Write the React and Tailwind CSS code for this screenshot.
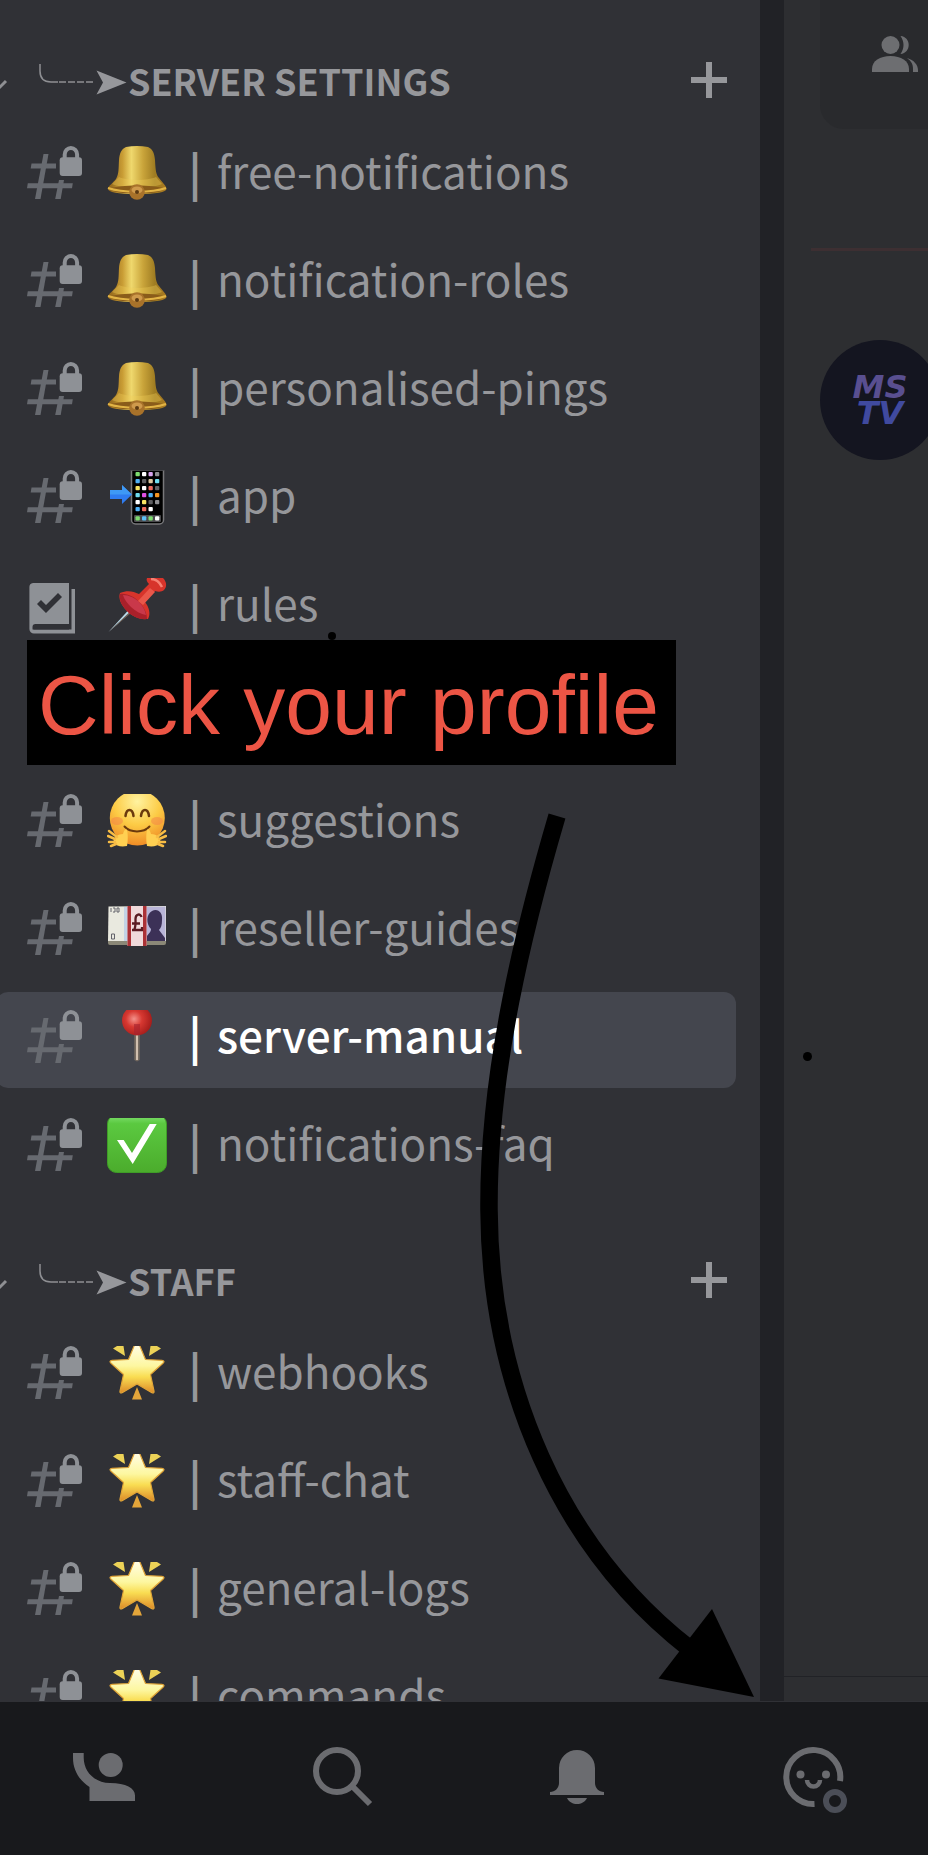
const serverChannels = [
  { name: 'free-notifications', emoji: 'bell' },
  { name: 'notification-roles', emoji: 'bell' },
  { name: 'personalised-pings', emoji: 'bell' },
  { name: 'app', emoji: 'phone' },
  { name: 'rules', emoji: 'pushpin', rules: true },
  { banner: 'Click your profile' },
  { name: 'suggestions', emoji: 'hug' },
  { name: 'reseller-guides', emoji: 'pounds' },
  { name: 'server-manual', emoji: 'roundPin', active: true },
  { name: 'notifications-faq', emoji: 'check' },
]

const staffChannels = [
  { name: 'webhooks', emoji: 'star' },
  { name: 'staff-chat', emoji: 'star' },
  { name: 'general-logs', emoji: 'star' },
  { name: 'commands', emoji: 'star' },
]

function LockedHash() {
  return (
    <svg viewBox="0 0 56 60" className="h-[60px] w-14 shrink-0" aria-hidden="true">
      <g fill="#676a70">
        <path d="M16.5 8h5l-8 45h-5.500z" />
        <path d="M32 34h5l-3.300 19h-5.500z" />
        <path d="M4.500 17.500H29v5H3.700z" />
        <path d="M.8 37.300h45l-.8 5H0z" />
      </g>
      <rect x="32.700" y="11.300" width="22.300" height="18.700" rx="3" fill="#8e9196" />
      <path d="M37.700 13V8.500a6.200 6.500 0 0 1 12.400 0V13" fill="none" stroke="#8e9196" strokeWidth="4" />
    </svg>
  )
}

function RulesBook() {
  return (
    <svg viewBox="0 0 56 60" className="h-[60px] w-14 shrink-0" aria-hidden="true">
      <path
        fill="#8e9196"
        fillRule="evenodd"
        d="M6 5h36v41H8.500a3 3 0 0 0-3 3v2.500H44.500V11H48v44.500H7a4.500 4.500 0 0 1-4.600-4.500V9A4 4 0 0 1 6 5zM10 26l9 9 16-16-4-4-12 12-5-5z"
      />
      <path d="M6.500 47H42v4.500H6.500z" fill="#303136" />
    </svg>
  )
}

const screenDots = [
  ['#7ddb6f', '#ffffff', '#d9a5ee', '#8d8d90'],
  ['#4fb0f5', '#5f5f62', '#dcc7a0', '#6fdcee'],
  ['#f7e463', '#ffffff', '#ea6a5c', '#626265'],
  ['#6fdcee', '#e04fe2', '#4fb0f5', '#f59420'],
  ['#ffffff', '#f7e463', '#5c5c5f', '#8d8d90'],
  ['#4fb0f5', '#ea6a5c', '#ffffff'],
]

const emojiArt = {
  bell: (
    <>
      <defs>
        <linearGradient id="bellBody" x1="0" x2="1">
          <stop offset="0" stopColor="#8c6018" />
          <stop offset=".25" stopColor="#c99d35" />
          <stop offset=".4" stopColor="#efd86d" />
          <stop offset=".6" stopColor="#c9a43a" />
          <stop offset=".8" stopColor="#9f7c22" />
          <stop offset="1" stopColor="#a97820" />
        </linearGradient>
      </defs>
      <path
        d="M19 1Q30-1 41 1c5 2 6.500 7 7 13 .5 10 1 15 4 18 3 4 7.500 8 7.500 11 0 3-10 5-29.500 5S1 46 1 43c0-3 5-6 8-10 3-5 2.500-11 3-19 .5-6 2-11 7-13z"
        fill="url(#bellBody)"
      />
      <path d="M12 31c8 4 28 4 37 0l6 7c-12 5-38 5-50 0z" fill="#f0cf5a" opacity=".35" />
      <path d="M2 42.500c12-4 44-4 56 0-4 4-14 5-28 5s-24-1-28-5z" fill="#8a5c1a" />
      <path d="M1 42c14 5 44 5 58 0" fill="none" stroke="#e2b445" strokeWidth="2" />
      <circle cx="30" cy="46" r="7.800" fill="#a8722a" />
      <ellipse cx="30" cy="44" rx="5.500" ry="3.500" fill="#cf9a4c" />
      <circle cx="30" cy="46" r="2" fill="#5e3a12" />
    </>
  ),
  phone: (
    <>
      <path d="M24.500 0h32v50a4 4 0 0 1-4 4h-24a4 4 0 0 1-4-4z" fill="#000" stroke="#77777a" strokeWidth="1.500" />
      <path d="M24 0h33" stroke="#303136" />
      {screenDots.map((row, y) =>
        row.map((fill, x) => (
          <rect key={`${x}-${y}`} x={28.5 + x * 6.500} y={2 + y * 7} width="4.300" height="4.300" rx="1" fill={fill} />
        )),
      )}
      <rect x="27" y="45" width="27" height="7" rx="1" fill="#4a4a4d" />
      {['#7ddb6f', '#5cc0f5', '#7ddb6f', '#ffffff'].map((fill, x) => (
        <rect key={x} x={28.5 + x * 6.500} y="46.300" width="4.300" height="4.300" rx="1" fill={fill} />
      ))}
      <path d="M3 20h12v-5l10 9.500-10 9.500v-5H3z" fill="#2f7cf0" />
      <path d="M3 20h12v-5l10 9.500H3z" fill="#45a5f7" opacity=".7" />
    </>
  ),
  pushpin: (
    <>
      <path d="M27 26l3 3L1.500 54z" fill="#b9dcec" />
      <path d="M29 28l1.500 1.500L1.500 54z" fill="#6b5a50" />
      <path d="M40 0h16c4 4 4 9 1 12-2 2-6 2-9 1L38 24c4 5 6 12 3 17-9 1-16-3-21-8-6-6-9-13-7-18 7-3 13-2 19 1l10-10c-2-2-3-4-2-6z" fill="#d7342b" />
      <path d="M13 16c7-1 15 3 19 8 5 5 8 11 8 17-8 1-15-3-20-8-5-5-8-11-7-17z" fill="#a9202a" />
      <path d="M16 17c6 0 12 3 16 7s6 8 7 13c-5-1-11-4-15-8s-7-8-8-12z" fill="#c9384a" />
      <path d="M43 10l5 4-12 13-5-4z" fill="#e9574a" />
      <path d="M44 1c5 0 9 4 11 8" fill="none" stroke="#f58073" strokeWidth="2.500" />
    </>
  ),
  hug: (
    <>
      <defs>
        <radialGradient id="hugFace" cx=".5" cy=".2" r=".85">
          <stop offset="0" stopColor="#fff3a0" />
          <stop offset=".5" stopColor="#fccb45" />
          <stop offset="1" stopColor="#ee8422" />
        </radialGradient>
      </defs>
      <circle cx="30.300" cy="24" r="27.500" fill="url(#hugFace)" />
      <ellipse cx="10" cy="27" rx="6" ry="4" fill="#f4824a" opacity=".5" />
      <ellipse cx="50" cy="27" rx="6" ry="4" fill="#f4824a" opacity=".5" />
      <g fill="none" stroke="#6b3a0d" strokeLinecap="round">
        <path d="M18.500 22c1-8 7-8 8 0M34 22c1-8 7-8 8 0" strokeWidth="2.500" />
        <path d="M17.500 32.500c6 6.500 19 6.500 25 0" strokeWidth="2" />
      </g>
      <path d="M20 52c-6 1-11 0-13-3-2-4 3-9 9-9 1-4 3-6 4-4 1 4 1 11 0 16z" fill="#ffd052" />
      <path d="M40 52c6 1 11 0 13-3 2-4-3-9-9-9-1-4-3-6-4-4-1 4-1 11 0 16z" fill="#ffd052" />
      <g stroke="#f8bd45" strokeWidth="2.500" strokeLinecap="round">
        <path d="M10 43l-8-6M8 45l-7-3M8 48l-6 0M9 50l-5 2" />
        <path d="M50 43l8-6M52 45l7-3M52 48l6 0M51 50l5 2" />
      </g>
    </>
  ),
  pounds: (
    <>
      <path d="M1 38h58v3a2 2 0 0 1-2 2H3a2 2 0 0 1-2-2z" fill="#8b8877" />
      <path d="M1.500 4.500L59 4v35H1z" fill="#e9e9df" />
      <path d="M17 5h4v34h-4z" fill="#c3d3e6" />
      <path d="M39 5l19.500-.5V39H39z" fill="#b9b5d8" />
      <path d="M40 34c2-3 4-4 4-7-5-5-5-15 1-18 6-3 11 2 10 9 0 5-1 8-3 10l6 8v3H40z" fill="#3c3157" />
      <path d="M4 6v4M6 6h2v4H6M10 6v4h2V6zM4.500 32h3v5h-3z" fill="none" stroke="#63636b" />
      <path d="M20.500 4h19v40h-19z" fill="#f0dadb" />
      <path d="M20.500 4H24v40h-3.500zM36 4h3.500v40H36z" fill="#ac3236" />
      <path d="M25 28h10v-3M27 28c2-3 1.500-6 1.500-11 0-5 5-6 6-2M25 21.500h8" fill="none" stroke="#5a1b22" strokeWidth="2.300" />
    </>
  ),
  roundPin: (
    <>
      <defs>
        <radialGradient id="pinHead" cx=".4" cy=".45" r=".6">
          <stop offset="0" stopColor="#f3918a" />
          <stop offset=".45" stopColor="#d73831" />
          <stop offset="1" stopColor="#a61d1b" />
        </radialGradient>
      </defs>
      <path d="M27.300 24h5.400v26l-2.700 1.500-2.700-1.500z" fill="#756a60" />
      <path d="M29 24h2v26h-2z" fill="#d0bfae" />
      <circle cx="30" cy="10.500" r="15" fill="url(#pinHead)" />
      <path d="M27 14h6v11h-6z" fill="#a32330" opacity=".6" />
    </>
  ),
  check: (
    <>
      <defs>
        <linearGradient id="checkBox" x1="0" y1="0" x2="0" y2="1">
          <stop offset="0" stopColor="#7fe070" />
          <stop offset=".15" stopColor="#5bc940" />
          <stop offset="1" stopColor="#4bac2c" />
        </linearGradient>
      </defs>
      <rect x=".5" y="-3" width="59" height="57.500" rx="9" fill="url(#checkBox)" stroke="#3f9d27" />
      <path d="M10 22h6.700L25 35 42.700 6h7l-24 40z" fill="#fff" />
    </>
  ),
  star: (
    <>
      <defs>
        <linearGradient id="starFill" x1="0" y1="0" x2="0" y2="1">
          <stop offset=".1" stopColor="#fffde8" />
          <stop offset=".5" stopColor="#fdf7a0" />
          <stop offset=".7" stopColor="#f9dd52" />
          <stop offset="1" stopColor="#dd8a28" />
        </linearGradient>
      </defs>
      <path
        d="M30-7l8.500 20.500L55 14.300c2 .2 2.500 1.700 1.200 2.700L43.500 28.500 47 45c.3 2-.8 2.500-2.500 1.500L30 38l-14.500 8.500c-1.700 1-2.800.5-2.500-1.500l3.500-16.500L3.800 17c-1.300-1-.8-2.500 1.200-2.700l16.500-.8z"
        fill="url(#starFill)"
        stroke="#e0a437"
        strokeWidth="1.200"
        strokeLinejoin="round"
      />
      <path d="M6 2.500L10 0h6.500L18 10zM54 2.500L50 0h-6.500L42 10z" fill="#ecd257" />
      <path d="M30 41l5 12.500H25z" fill="#e3a53a" />
    </>
  ),
}

function Emoji({ name }) {
  return (
    <svg viewBox="0 0 60 60" className="ml-6 size-[60px] shrink-0" aria-hidden="true">
      {emojiArt[name]}
    </svg>
  )
}

function Channel({ channel }) {
  return (
    <a
      href={`#${channel.name}`}
      className={
        channel.active
          ? 'flex h-24 items-center rounded-xl bg-[#44464e] pl-[31px] font-medium text-white'
          : 'flex h-24 items-center rounded-xl pl-[31px] text-[#96979b]'
      }
    >
      {channel.rules ? <RulesBook /> : <LockedHash />}
      <Emoji name={channel.emoji} />
      <span className="ml-5 flex w-4 justify-center pb-3 text-[44px] font-bold leading-[56px]">|</span>
      <span className="ml-3.5 whitespace-nowrap pb-3 text-[44px] leading-[56px]">{channel.name}</span>
    </a>
  )
}

function Category({ title, channels }) {
  return (
    <section>
      <div className="flex h-24 items-center justify-between pr-[33px]">
        <h2 className="flex items-center text-[36px] font-bold leading-[48px] text-[#96979b]">
          <svg viewBox="0 0 128 48" className="h-12 w-32 shrink-0" fill="none" stroke="#8e8f93" aria-hidden="true">
            <path d="M-4 27L0 31l6-6" strokeWidth="3" />
            <path d="M40 8v7q0 11 11 11h7" strokeWidth="1.500" />
            <path d="M59 26h35" strokeWidth="1.500" strokeDasharray="7 2" />
            <path d="M96.500 14.500l30 12-30 12 6.500-12z" fill="#96979b" stroke="none" />
          </svg>
          {title}
        </h2>
        <button aria-label={`Add channel to ${title}`}>
          <svg viewBox="0 0 36 36" className="size-9" stroke="#96979b" strokeWidth="6">
            <path d="M18 0v36M0 18h36" />
          </svg>
        </button>
      </div>
      <ul className="-ml-1 flex flex-col gap-3 pr-6">
        {channels.map((channel) =>
          channel.banner ? (
            <li key={channel.banner} className="relative h-24">
              <p className="absolute -top-7 left-[31px] h-[125px] w-[649px] whitespace-nowrap bg-black pl-[11px] font-['Liberation_Sans',sans-serif] text-[84px] leading-[130px] text-[#ec5545]">
                {channel.banner}
              </p>
            </li>
          ) : (
            <li key={channel.name}>
              <Channel channel={channel} />
            </li>
          ),
        )}
      </ul>
    </section>
  )
}

function ChatPeek() {
  return (
    <aside className="flex w-36 shrink-0 flex-col overflow-hidden bg-[#2d2e31]">
      <div className="ml-9 h-[129px] rounded-bl-3xl bg-[#292a2d] pl-[52px] pt-9">
        <svg viewBox="0 0 46 36" className="h-9 w-[46px]" fill="#6d6e71" aria-hidden="true">
          <circle cx="18.500" cy="9" r="9" />
          <path d="M0 36v-3C0 25 8 20 18.500 20S37 25 37 33v3z" />
          <path d="M28.500 0c11 1 11 17 0 18 4-6 4-12 0-18zM35 22c7 2 11 7 11 12v2h-5v-3c0-5-2-8-6-11z" />
        </svg>
      </div>
      <div className="ml-[27px] mt-[119px] h-[3px] shrink-0 bg-[#3d2f32]" />
      <div className="ml-9 mt-[89px] flex size-[120px] shrink-0 flex-col items-center justify-center rounded-full bg-[#141520] font-['DejaVu_Sans',sans-serif] text-[32px] font-bold italic leading-[26px]">
        <span className="text-[#594f90]">MS</span>
        <span className="text-[#404a9f]">TV</span>
      </div>
      <div className="mt-auto h-[25px] shrink-0 border-t border-[#212226]" />
    </aside>
  )
}

function Annotations() {
  return (
    <svg className="pointer-events-none absolute inset-0 size-full" aria-hidden="true">
      <path d="M557 816C525 925 488 1070 489 1210C490 1385 560 1548 690 1649" fill="none" stroke="#000" strokeWidth="17.500" />
      <path d="M712 1609l42 88-95.500-18.500z" />
      <circle cx="332" cy="636" r="4" />
      <circle cx="807.500" cy="1056.500" r="4.500" />
    </svg>
  )
}

function TabBar() {
  return (
    <nav className="flex h-[154px] shrink-0 justify-between border-t border-[#303136] bg-[#18191c] pl-[68px] pr-[79px] pt-[39px] text-[#6b6c70]">
      <button aria-label="Friends" className="size-[72px]">
        <svg viewBox="0 0 72 72" fill="currentColor">
          <path d="M5 12h10.700v4.500C15.700 31 27 42 42 42c16 0 25 5 25 12.500V60H21.500V46C11 39 5 29 5 17z" />
          <circle cx="42.700" cy="24" r="12" />
        </svg>
      </button>
      <button aria-label="Search" className="size-[72px]">
        <svg viewBox="0 0 72 72" fill="none" stroke="currentColor" strokeWidth="6">
          <circle cx="33" cy="30" r="21" />
          <path d="M48 45l18 18" />
        </svg>
      </button>
      <button aria-label="Notifications" className="size-[72px]">
        <svg viewBox="0 0 72 72" fill="currentColor">
          <path d="M9 54v-3c5 0 9-4 9-9V27a18 18 0 0 1 36 0v15c0 5 4 9 9 9v3zM26 57h20c-4 8-16 8-20 0z" />
        </svg>
      </button>
      <button aria-label="Profile" className="size-[72px]">
        <svg viewBox="0 0 72 72" className="overflow-visible" fill="none" stroke="currentColor" strokeWidth="6">
          <path d="M37.500 63A27 27 0 1 1 63 40" />
          <path d="M30 39a6.500 6.500 0 0 0 13 0" strokeWidth="4.500" />
          <g fill="currentColor" stroke="none">
            <circle cx="23.500" cy="33.500" r="4" />
            <circle cx="49" cy="33.500" r="4" />
          </g>
          <circle cx="58" cy="60" r="9" stroke="#4b4e57" />
        </svg>
      </button>
    </nav>
  )
}

export default function App() {
  return (
    <div className="flex h-screen flex-col overflow-hidden bg-[#18191c] font-['Noto_Sans_CJK_JP','Noto_Sans_CJK_SC',sans-serif]">
      <div className="relative flex min-h-0 flex-1 overflow-hidden">
        <main className="flex min-w-0 flex-1 flex-col gap-9 overflow-hidden bg-[#303136] pt-8">
          <Category title="SERVER SETTINGS" channels={serverChannels} />
          <Category title="STAFF" channels={staffChannels} />
        </main>
        <div className="w-6 shrink-0 bg-[#212226]" />
        <ChatPeek />
        <Annotations />
      </div>
      <TabBar />
    </div>
  )
}
